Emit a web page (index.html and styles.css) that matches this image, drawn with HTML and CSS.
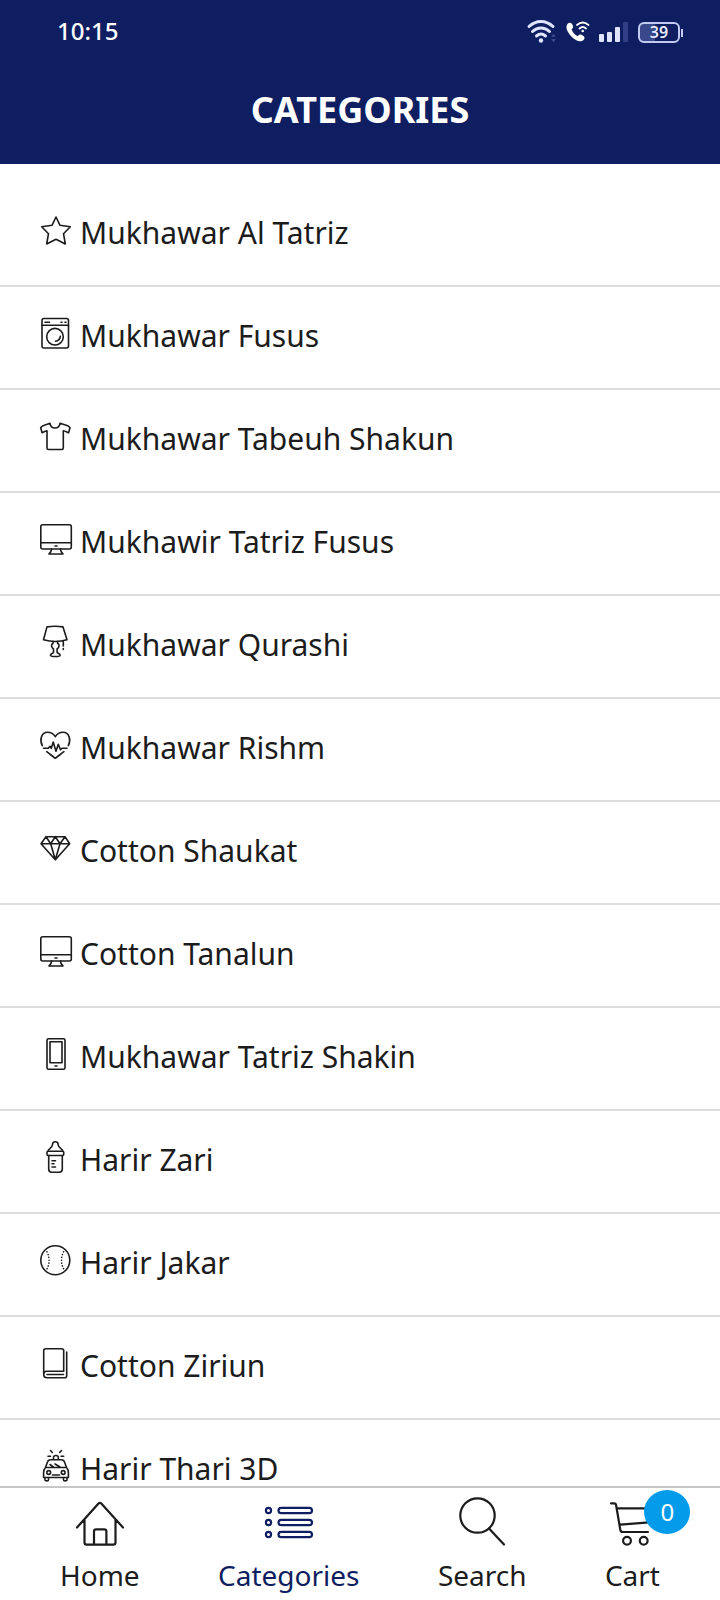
FILE: index.html
```html
<!DOCTYPE html>
<html lang="en">
<head>
<meta charset="utf-8">
<meta name="viewport" content="width=device-width, initial-scale=1">
<title>Categories</title>
<link rel="stylesheet" href="styles.css">
</head>
<body>
<header class="header">
  <div class="status">
    <span class="status-time">10:15</span>
    <div class="status-icons">
      <svg class="status-wifi" viewBox="0 0 30 24" aria-hidden="true"><g fill="none" stroke="#dfe4ff" stroke-width="3" stroke-linecap="round"><path d="M2 6.500C9-.3 19-.3 26 6.500"/><path d="M5.500 11.500c5-4.800 12-4.800 17 0"/><path d="M9.500 16c3-2.600 6-2.600 9 0"/></g><circle cx="14" cy="20.500" r="2.200" fill="#dfe4ff"/><path d="M24 17l2.500-3.500L29 17zM24 19l2.500 3.500L29 19z" fill="#39488a"/></svg>
      <svg class="status-call" viewBox="0 0 24 24" aria-hidden="true"><path d="M1.500 4c1.800-1.800 3.800-1.500 5.200 1.200.9 1.900.4 2.800-1.200 4 1.200 3.200 3.300 5.500 6.300 7 1.300-1.700 2.200-2 4-1.200 3 1.400 3.500 2.900 1.800 4.900C14.500 23 9 20.500 5 16 1.300 12-1 7 1.500 4z" fill="#fff"/><g fill="none" stroke="#fff" stroke-width="1.800" stroke-linecap="round"><path d="M11 5c3.500-3 8-3 11.500 0M13.500 8.500c2-1.800 4.500-1.800 6.500 0"/></g><circle cx="16.700" cy="11" r="1.300" fill="#fff"/></svg>
      <svg class="status-signal" viewBox="0 0 30 24" aria-hidden="true"><g fill="#dfe4ff"><rect x="0" y="14" width="5" height="8" rx="1"/><rect x="8" y="12" width="5" height="10" rx="1"/><rect x="16" y="7" width="5" height="15" rx="1"/></g><rect x="24" y="2" width="5" height="20" rx="1" fill="#303f86"/></svg>
      <span class="battery">39</span>
    </div>
  </div>
  <h1 class="title">CATEGORIES</h1>
</header>

<main class="list">
  <a class="row" href="#"><svg class="row-icon" viewBox="0 0 32 32" aria-hidden="true"><path d="M16 3l4 8.300 10.300 1.400-6.800 7 1.800 10.300L16 25.300 6.700 30l1.800-10.300-6.800-7L12 11.300z"/></svg><span>Mukhawar Al Tatriz</span></a>
  <a class="row" href="#"><svg class="row-icon" viewBox="0 0 32 32" aria-hidden="true"><rect x="2" y="1.500" width="26.500" height="29.500" rx="2"/><path d="M2 8.300h26.500M5 5.200h4.500M21 5.200h1M25 5.200h1M15.500 24.200c3-.4 4.500-2 4.800-4.800"/><circle cx="15" cy="19.700" r="8.300"/></svg><span>Mukhawar Fusus</span></a>
  <a class="row" href="#"><svg class="row-icon" viewBox="0 0 32 32" aria-hidden="true"><path d="M10 3.300C11 9.500 19 9.500 20 3.300l7 2.200c1.500.5 2.200 1 3 2.200l-1.400 5c-2-.8-3.500-1.800-5.300-2V28c0 1-.5 1.500-1.500 1.500H8.500C7.500 29.500 7 29 7 28V10.700c-1.800.2-3.300 1.200-4.900 2L.7 7.700c.8-1.200 1.500-1.700 3-2.200z"/></svg><span>Mukhawar Tabeuh Shakun</span></a>
  <a class="row" href="#"><svg class="row-icon" viewBox="0 0 32 32" aria-hidden="true"><rect x=".8" y="1.700" width="30.500" height="24.300" rx="2"/><path d="M.8 19.700h30.500M15 23h2M11.500 26c0 2-.7 3.700-2.500 5h14c-1.800-1.300-2.500-3-2.500-5"/></svg><span>Mukhawir Tatriz Fusus</span></a>
  <a class="row" href="#"><svg class="row-icon" viewBox="0 0 32 32" aria-hidden="true"><path d="M7 .9c5-.8 11-.8 16 0l4 12.900c-7 2-16.500 2-23.500 0zM13 15.300v2c-2.500 1.500-1.500 4.200.5 5.700v3.500c-1 1.200-3 1-3 2.700 0 1.800 9.600 1.800 9.600 0 0-1.700-2-1.500-3-2.700V23c2-1.500 3-4.200.5-5.700v-2M23.300 15v5M23.300 22.500v1"/></svg><span>Mukhawar Qurashi</span></a>
  <a class="row" href="#"><svg class="row-icon" viewBox="0 0 32 32" aria-hidden="true"><path d="M2.300 16.700C-.8 11 1.500 3.300 7.500 3.300c4 0 6.300 1.900 7.800 4.400 1.500-2.500 3.800-4.400 7.800-4.400 6 0 8.300 7.700 5.200 13.400M3.500 19.300h4.800l1.700-2 1.300 2L13.200 13l2.800 9.300 2.300-7 2.200 5.500 1.500-1.500h5M6.700 22.700c3.600 2.800 5 3.800 8.600 6.600 3.600-2.800 5-3.800 8.600-6.600"/></svg><span>Mukhawar Rishm</span></a>
  <a class="row" href="#"><svg class="row-icon" viewBox="0 0 32 32" aria-hidden="true"><path d="M6 4.700h19l4.700 7-14.400 16L1 11.700zM1 11.700h28.700M6 4.700l4.700 7 4.600-7 4.700 7 5-7M10.700 11.700l4.600 16 4.700-16"/></svg><span>Cotton Shaukat</span></a>
  <a class="row" href="#"><svg class="row-icon" viewBox="0 0 32 32" aria-hidden="true"><rect x=".8" y="1.700" width="30.500" height="24.300" rx="2"/><path d="M.8 19.700h30.500M15 23h2M11.500 26c0 2-.7 3.700-2.500 5h14c-1.800-1.300-2.500-3-2.500-5"/></svg><span>Cotton Tanalun</span></a>
  <a class="row" href="#"><svg class="row-icon" viewBox="0 0 32 32" aria-hidden="true"><rect x="7" y=".8" width="18" height="30.400" rx="1.500"/><rect x="10" y="3.800" width="12" height="21"/><path d="M15 28h2"/></svg><span>Mukhawar Tatriz Shakin</span></a>
  <a class="row" href="#"><svg class="row-icon" viewBox="0 0 32 32" aria-hidden="true"><path d="M8 10.300c.3-3 4-3 4.400-6.300 0-4.300 5.800-4.300 5.800 0 .4 3.300 4.400 3.300 4.700 6.300"/><rect x="7" y="10.300" width="16.700" height="4.200" rx="1"/><path d="M8.700 14.500V28c0 2 1 3.200 3 3.200h7.600c2 0 3-1.200 3-3.200V14.500M12 19.700h3.500M12 22.700h2M12 26h3.500"/></svg><span>Harir Zari</span></a>
  <a class="row" href="#"><svg class="row-icon" viewBox="0 0 32 32" aria-hidden="true"><circle cx="15.300" cy="16.300" r="14.500"/><path stroke-dasharray=".1 2.800" d="M7 7.800c2.800 5.500 2.800 11.500 0 17M23.600 7.800c-2.800 5.500-2.800 11.500 0 17"/></svg><span>Harir Jakar</span></a>
  <a class="row" href="#"><svg class="row-icon" viewBox="0 0 32 32" aria-hidden="true"><path d="M3.700 27.500V3.700c0-1.300.7-2 2-2h16c1.300 0 2 .7 2 2v20.600H6.700c-4 0-4 6.400 0 6.400h18c1.300 0 2-.7 2-2V5M7 27.500h16.500"/></svg><span>Cotton Ziriun</span></a>
  <a class="row" href="#"><svg class="row-icon" viewBox="0 0 32 32" aria-hidden="true"><path d="M13.500 9.500V7.300c0-2.500 4.800-2.500 4.800 0v2.200M10.500.5l1.800 2M21.500.5l-1.800 2M8 6.300h2.500M21 6.300h2.700M5.500 17.500L7.500 12c.5-1.600 1.300-2.300 3-2.300h11c1.700 0 2.500.7 3 2.300l2 5.500M5.500 17.500h21c1.300 1.500 1.900 3 1.900 5v5H3.600v-5c0-2 .6-3.500 1.900-5zM10 14.500l3.500 2.500M15 14l5 3M5 27.500V30c0 1.300 3.500 1.300 3.500 0v-2.500M23.500 27.500V30c0 1.300 3.500 1.300 3.500 0v-2.500M12.500 25h7"/><circle cx="8.700" cy="22.500" r="1.900"/><circle cx="23.200" cy="22.500" r="1.900"/></svg><span>Harir Thari 3D</span></a>
</main>

<nav class="tabs">
  <a class="tab" href="#"><span class="tab-art"><svg class="tab-icon" viewBox="0 0 48 48" aria-hidden="true"><path d="M1 28.500L22.500 4.500c1-1 1.800-1 2.800 0L47 28.500M8.500 21v22.500c0 1.500.8 2.200 2.200 2.200h26.600c1.400 0 2.200-.7 2.200-2.200V21M18 45.500V32.500c0-1.400.7-2.200 2.200-2.200h8c1.400 0 2.200.8 2.200 2.200v13"/></svg></span><span>Home</span></a>
  <a class="tab tab-active" href="#" aria-current="page"><span class="tab-art"><svg class="tab-icon" viewBox="0 0 48 48" aria-hidden="true"><circle cx="3.500" cy="11.500" r="2.600"/><circle cx="3.500" cy="23.500" r="2.600"/><circle cx="3.500" cy="35.500" r="2.600"/><rect x="13.500" y="8.800" width="33.500" height="5.400" rx="2.700"/><rect x="13.500" y="20.800" width="33.500" height="5.400" rx="2.700"/><rect x="13.500" y="32.800" width="33.500" height="5.400" rx="2.700"/></svg></span><span>Categories</span></a>
  <a class="tab" href="#"><span class="tab-art"><svg class="tab-icon" viewBox="0 0 48 48" aria-hidden="true"><circle cx="19.500" cy="16.500" r="17.200"/><path d="M31 29.500l15 16"/></svg></span><span>Search</span></a>
  <a class="tab" href="#"><span class="tab-art"><svg class="tab-icon" viewBox="0 0 48 48" aria-hidden="true"><path d="M3 4.300h3.200c1.200 0 1.700.7 1.900 1.900l4.200 24.500c.3 1.500 1 2.300 2.500 2.300H40M9 9.300h36l-4 14-28.500 2.400"/><circle cx="19" cy="41.700" r="3.900"/><circle cx="35.700" cy="41.700" r="3.900"/></svg><span class="badge">0</span></span><span>Cart</span></a>
</nav>
</body>
</html>
```
FILE: styles.css
```css
* {
  box-sizing: border-box;
}

body {
  margin: 0;
  height: 100vh;
  display: flex;
  flex-direction: column;
  background: #fff;
  color: #1c1c1c;
  font-family: "Noto Sans", sans-serif;
}

a {
  color: inherit;
  text-decoration: none;
}

svg {
  display: block;
  overflow: visible;
}

.header {
  flex: none;
  background: #0e1e61;
  color: #fff;
}

.status {
  display: flex;
  justify-content: space-between;
  align-items: center;
  height: 64px;
  padding: 0 40px 0 57px;
}

.status-time {
  font-size: 24px;
  font-weight: 500;
  line-height: 32px;
  padding-bottom: 2px;
}

.status-icons {
  display: flex;
  align-items: center;
  gap: 9px;
}

.status-wifi,
.status-signal {
  width: 30px;
  height: 24px;
}

.status-call {
  width: 24px;
  height: 24px;
}

.battery {
  position: relative;
  width: 42px;
  height: 21px;
  border: 2px solid #c3caf0;
  border-radius: 6px;
  background: linear-gradient(90deg, #39488a 39%, transparent 39%);
  color: #e6eaff;
  font-size: 16px;
  font-weight: 600;
  line-height: 17px;
  text-align: center;
}

.battery::after {
  content: "";
  position: absolute;
  right: -5px;
  top: 5px;
  width: 2px;
  height: 8px;
  background: #c3caf0;
}

.title {
  margin: 0;
  padding-bottom: 8px;
  font-size: 36px;
  font-weight: 700;
  line-height: 92px;
  text-align: center;
}

.list {
  flex: 1;
  min-height: 0;
  overflow-y: auto;
  scrollbar-width: none;
  padding-top: 20px;
}

.row {
  display: flex;
  align-items: flex-start;
  gap: 8px;
  padding: 30px 40px 33px;
  border-bottom: 2px solid #dcdcdc;
  font-size: 30px;
  line-height: 38px;
}

.row-icon {
  flex: none;
  width: 32px;
  height: 32px;
  fill: none;
  stroke: currentColor;
  stroke-width: 1.6;
  stroke-linecap: round;
  stroke-linejoin: round;
}

.tabs {
  flex: none;
  display: flex;
  justify-content: space-between;
  padding: 11px 60px 7px;
  border-top: 2px solid #c6c6c6;
}

.tab {
  display: flex;
  flex-direction: column;
  align-items: center;
  gap: 10px;
  font-size: 28px;
  line-height: 36px;
}

.tab-active {
  color: #0e1e61;
}

.tab-art {
  position: relative;
}

.tab-icon {
  width: 48px;
  height: 48px;
  fill: none;
  stroke: currentColor;
  stroke-width: 2.2;
  stroke-linecap: round;
  stroke-linejoin: round;
}

.badge {
  position: absolute;
  left: 36px;
  top: -9px;
  width: 46px;
  height: 44px;
  border-radius: 50%;
  background: #049bea;
  color: #fff;
  font-size: 24px;
  line-height: 44px;
  text-align: center;
}
```
